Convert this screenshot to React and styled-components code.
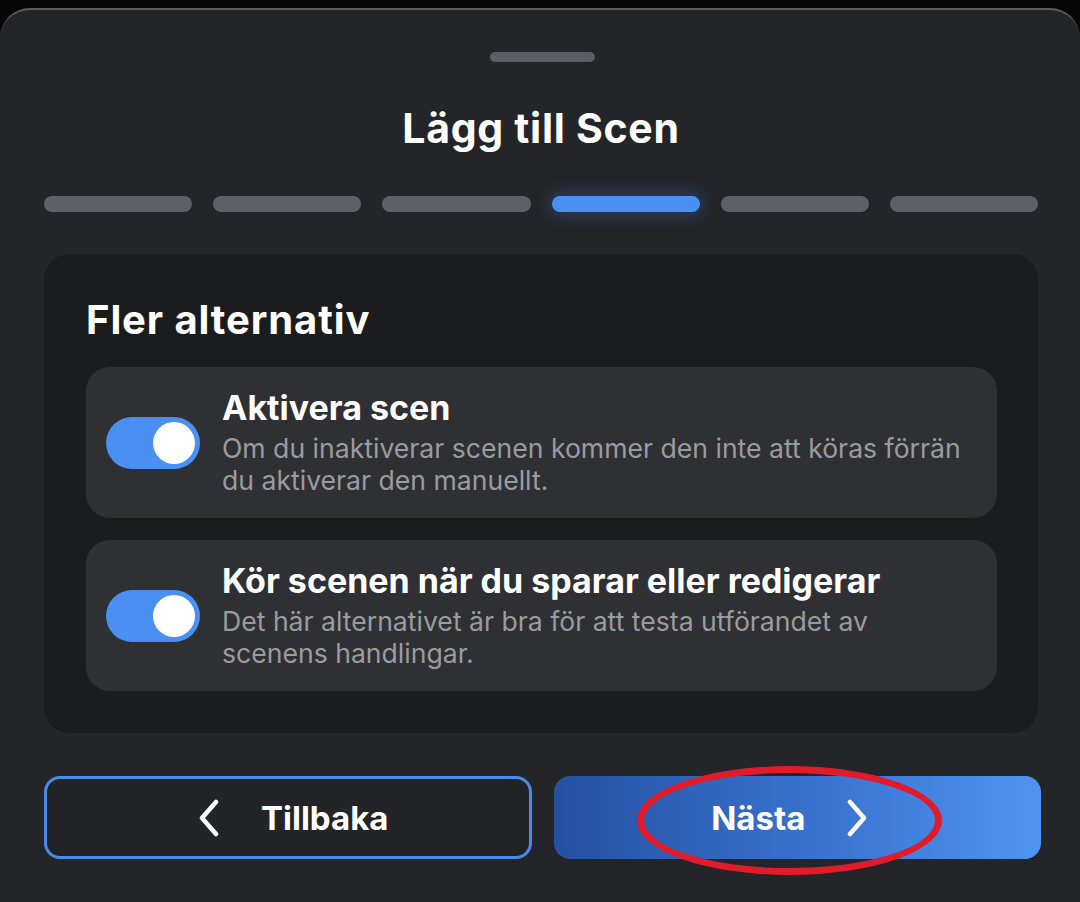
import React from "react";
import styled, { createGlobalStyle } from "styled-components";

const Global = createGlobalStyle`
  html, body {
    margin: 0;
    padding: 0;
    background: #050505;
    font-family: Inter, "Noto Sans", sans-serif;
  }
  #root {
    padding-top: 8px;
  }
`;

const Sheet = styled.div`
  box-sizing: border-box;
  width: 1080px;
  height: 894px;
  background: #242528;
  border-top: 2px solid #5c5d62;
  border-radius: 30px 30px 0 0;
  padding: 42px 42px 0 44px;
  display: flex;
  flex-direction: column;
  position: relative;
  overflow: hidden;
`;

const Handle = styled.div`
  align-self: center;
  width: 105px;
  height: 10px;
  border-radius: 5px;
  background: #5d5e66;
  margin-left: 2px;
`;

const Title = styled.h1`
  margin: 42px 0 0;
  text-align: center;
  color: #fff;
  font-size: 41px;
  font-weight: 700;
  line-height: 48px;
  letter-spacing: 0.7px;
`;

const Steps = styled.div`
  display: grid;
  grid-template-columns: repeat(6, 1fr);
  column-gap: 21px;
  margin-top: 44px;
`;

const Step = styled.div`
  height: 16px;
  border-radius: 8px;
  background: ${p => (p.active ? "#4a8ff2" : "#5e6166")};
  box-shadow: ${p => (p.active ? "0 0 16px 4px rgba(60, 130, 240, 0.28)" : "none")};
`;

const Card = styled.div`
  margin-top: 42px;
  background: #1b1c1e;
  border-radius: 26px;
  padding: 44px 41px 42px 42px;
  display: flex;
  flex-direction: column;
  gap: 22px;
`;

const CardTitle = styled.h2`
  margin: 0 0 3px;
  color: #fff;
  font-size: 40px;
  font-weight: 700;
  line-height: 44px;
  letter-spacing: 0.9px;
`;

const Row = styled.div`
  box-sizing: border-box;
  height: 151px;
  background: #2f3034;
  border-radius: 24px;
  padding: 0 20px;
  display: flex;
  align-items: center;
  gap: 22px;
`;

const Toggle = styled.div`
  flex: none;
  box-sizing: border-box;
  width: 94px;
  height: 52px;
  border-radius: 26px;
  background: #4a8ff2;
  padding: 5px;
  display: flex;
  justify-content: flex-end;
`;

const Knob = styled.div`
  width: 42px;
  height: 42px;
  border-radius: 50%;
  background: #fff;
`;

const RowText = styled.div`
  display: flex;
  flex-direction: column;
  max-width: 740px;
  margin-top: -3px;
`;

const RowTitle = styled.div`
  color: #fff;
  font-size: 34px;
  font-weight: 700;
  line-height: 42px;
`;

const RowDesc = styled.div`
  margin-top: 3px;
  color: #9b9ca0;
  font-size: 26.6px;
  line-height: 32px;
`;

const Buttons = styled.div`
  display: grid;
  grid-template-columns: 1fr 1fr;
  column-gap: 22px;
  margin-top: 43px;
  margin-right: -3px;
`;

const Button = styled.button`
  box-sizing: border-box;
  height: 83px;
  border-radius: 16px;
  border: ${p => (p.primary ? "none" : "3px solid #4a8aea")};
  background: ${p =>
    p.primary ? "linear-gradient(90deg, #2551a0 0%, #3770cc 50%, #4f94f2 100%)" : "#232427"};
  color: #fff;
  font-family: Inter, "Noto Sans", sans-serif;
  font-size: 33px;
  font-weight: 700;
  display: flex;
  align-items: center;
  justify-content: center;
  gap: 40px;
  padding: ${p => (p.primary ? "0 14px 0 0" : "0 0 0 10px")};
`;

const Chevron = ({ dir }) => (
  <svg width="24" height="38" viewBox="0 0 24 38" fill="none">
    <path
      d={dir === "left" ? "M19 3 L5 19 L19 35" : "M5 3 L19 19 L5 35"}
      stroke="#fff"
      strokeWidth="4.5"
      strokeLinecap="round"
      strokeLinejoin="round"
    />
  </svg>
);

const Annotation = styled.div`
  position: absolute;
  left: 637px;
  top: 756px;
  width: 305px;
  height: 109px;
  box-sizing: border-box;
  border: 7px solid #e01b2a;
  border-radius: 50%;
  pointer-events: none;
`;

const options = [
  {
    title: "Aktivera scen",
    desc: "Om du inaktiverar scenen kommer den inte att köras förrän du aktiverar den manuellt.",
  },
  {
    title: "Kör scenen när du sparar eller redigerar",
    desc: "Det här alternativet är bra för att testa utförandet av scenens handlingar.",
  },
];

export default function App() {
  return (
    <>
      <Global />
      <Sheet>
        <Handle />
        <Title>Lägg till Scen</Title>
        <Steps>
          {[0, 1, 2, 3, 4, 5].map(i => (
            <Step key={i} active={i === 3} />
          ))}
        </Steps>
        <Card>
          <CardTitle>Fler alternativ</CardTitle>
          {options.map(o => (
            <Row key={o.title}>
              <Toggle>
                <Knob />
              </Toggle>
              <RowText>
                <RowTitle>{o.title}</RowTitle>
                <RowDesc>{o.desc}</RowDesc>
              </RowText>
            </Row>
          ))}
        </Card>
        <Buttons>
          <Button>
            <Chevron dir="left" />
            Tillbaka
          </Button>
          <Button primary>
            Nästa
            <Chevron dir="right" />
          </Button>
        </Buttons>
        <Annotation />
      </Sheet>
    </>
  );
}
